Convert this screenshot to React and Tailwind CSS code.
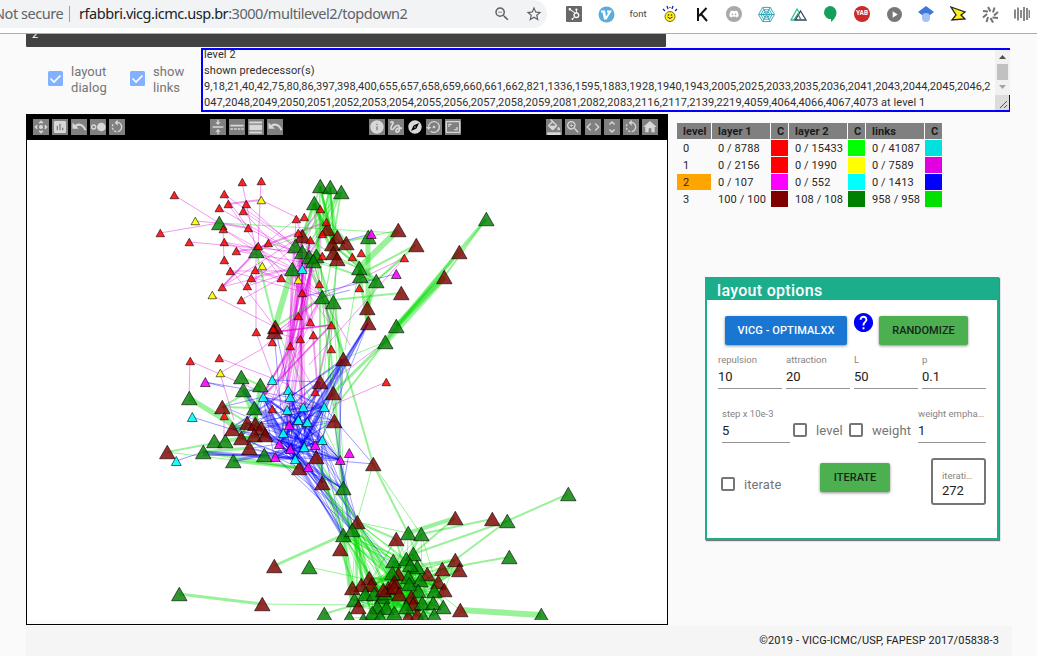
import {
  MdControlCamera, MdInsertChart, MdRotateLeft, MdVerticalAlignCenter, MdViewDay, MdInfo, MdGesture,
  MdExplore, MdSettingsBackupRestore, MdAspectRatio, MdFormatColorFill, MdZoomIn, MdCode, MdUnfoldMore, MdHome,
  MdStarBorder, MdZoomOut, MdHelp, MdPlayArrow,
} from "react-icons/md";
import { FaHubspot, FaDiscord } from "react-icons/fa";

/* ---------- browser bar ---------- */

function Extensions() {
  const cell = "flex w-8 justify-center items-center";
  return (
    <div className="ml-[11px] flex h-7 flex-none items-center">
      <div className={cell}><div className="flex size-4 items-center justify-center rounded-[1px] bg-[#686868] text-[12px] text-white"><FaHubspot /></div></div>
      <div className={cell}>
        <svg width="17" height="17" viewBox="0 0 17 17"><circle cx="8.5" cy="8.5" r="8" fill="#5badde" /><path d="M3 4.500h4l1 6 2.500-4H9V4.500h5L8.500 13.500H6L4.500 6.500H3z" fill="#fff" /></svg>
      </div>
      <div className={cell + " font-['Roboto',sans-serif] text-[9.5px] text-[#444]"}>font</div>
      <div className={cell}>
        <svg width="16" height="18" viewBox="0 0 16 18"><circle cx="8" cy="11.500" r="5" fill="#ffef19" stroke="#77701a" /><g stroke="#2222a0" strokeWidth="1.3"><path d="M5 1l1 3M11 1l-1 3M1 4l2 2M15 4l-2 2M8 2v1" /></g><path d="M5.500 12q2.500 3 5 0" fill="none" stroke="#333" /><circle cx="6.500" cy="10" r=".8" fill="#222" /><circle cx="9.500" cy="10" r=".8" fill="#222" /></svg>
      </div>
      <div className={cell}><svg width="12" height="15" viewBox="0 0 12 15" fill="none" stroke="#111" strokeWidth="2"><path d="M2 1v13M10.500 1L3 9M5 7l6 7" /></svg></div>
      <div className={cell}><div className="flex size-4 items-center justify-center rounded-full bg-[#a9a9a9] text-[10px] text-white"><FaDiscord /></div></div>
      <div className={cell}>
        <svg width="17" height="17" viewBox="0 0 18 18" fill="none" stroke="#28a6b5" strokeWidth="1"><path d="M5 1.500h8L17.500 9 13 16.500H5L.5 9zM6 4h6l3 5-3 5H6L3 9zM7.200 6.300h3.600l1.700 2.700-1.700 2.700H7.200L5.500 9zM5 1.500l8 15M13 1.500l-8 15M1 9h16" /></svg>
      </div>
      <div className={cell}>
        <svg width="17" height="14" viewBox="0 0 17 14" fill="none" strokeWidth="1.300"><path d="M6 13H1L7 2l2.500 4" stroke="#2fc48d" /><path d="M5.500 13l5-9 5.500 9z" stroke="#35495e" /><path d="M4 13l4-6 3 6" stroke="#3b8070" /></svg>
      </div>
      <div className={cell}><svg width="14" height="17" viewBox="0 0 14 17"><path d="M7 0a6.500 6.500 0 016.500 6.500c0 4-3 7.500-5.500 9.500v-3A6.500 6.500 0 117 0" fill="#14a05a" /></svg></div>
      <div className={cell}><div className="flex size-4 items-center justify-center rounded-full bg-[#cb2a26] font-['Roboto',sans-serif] text-[6.5px] font-bold text-white">YAB</div></div>
      <div className={cell}><div className="flex size-[15px] items-center justify-center rounded-full bg-[#777] text-[11px] text-white"><MdPlayArrow /></div></div>
      <div className={cell}>
        <svg width="16" height="17" viewBox="0 0 16 17"><path d="M4 9a4 4 0 118 0v3a4 4 0 11-8 0z" fill="#a5c2f7" /><path d="M8 0l8 6-4 3a5 5 0 00-8 0L0 6z" fill="#3f77d9" /></svg>
      </div>
      <div className={cell}><svg width="17" height="16" viewBox="0 0 17 16"><path d="M1 1l14 5-4 3 4 4-13 1 4-5z" fill="#fff01c" stroke="#222" strokeWidth="1.300" /></svg></div>
      <div className={cell}>
        <svg width="17" height="17" viewBox="0 0 17 17" fill="none" stroke="#737373" strokeWidth="2"><path d="M8.500 5.500L6 1M11 6.500l1.500-5M12 9.500l4-3.500M10.500 11.500l5.500.5M8.500 12l2.500 4.500M6 11l-1.500 5M5 8l-4 3.500M6 5.500L1 5" /></svg>
      </div>
      <div className={cell}><svg width="16" height="16" viewBox="0 0 16 16" stroke="#858585" strokeWidth="1.900"><path d="M1 3.500v9M4 1.500v13M7 4v8M10 1v14M13 2v12M15.500 4v8" /></svg></div>
    </div>
  );
}

function BrowserBar() {
  return (
    <header className="flex h-[34px] items-start overflow-hidden border-b border-[#adadad] bg-white font-['Noto_Sans','Open_Sans',sans-serif] text-[14.5px] whitespace-nowrap text-[#5f6368]">
      <div className="flex h-7 w-[547px] flex-none items-center rounded-r-full bg-[#f1f3f4]">
        <div className="ml-[-6px] w-[68px] flex-none tracking-[-0.45px]">Not secure</div>
        <div className="ml-[7px] h-4 w-px flex-none bg-[#9a9da0]" />
        <div className="ml-[9px] w-[414px] flex-none tracking-[-0.46px]"><span className="text-[#202124]">rfabbri.vicg.icmc.usp.br</span>:3000/multilevel2/topdown2</div>
        <MdZoomOut className="size-[18px] flex-none" />
        <MdStarBorder className="ml-[14px] size-[18px] flex-none" />
      </div>
      <Extensions />
    </header>
  );
}

/* ---------- graph data ---------- */

const red = [[174,195],[160,233],[189,242],[242,182],[261,181],[224,194],[228,204],[246,204],[219,208],[243,211],[223,229],[248,228],[224,242],[236,251],[268,243],[258,246],[224,260],[230,271],[255,270],[251,278],[247,286],[222,287],[241,300],[281,278],[256,332],[272,342],[296,219],[304,217],[320,209],[326,222],[298,233],[322,234],[310,240],[322,256],[319,284],[302,293],[298,316],[310,322],[331,325],[313,335],[300,339],[290,346],[352,257],[361,253],[359,288],[404,258],[331,349],[273,329],[190,361],[219,358],[386,382],[272,409],[224,416],[315,392]];
const yellow = [[261,200],[195,221],[262,266],[298,280],[212,295],[220,373]];
const cyan = [[302,269],[272,380],[288,390],[290,397],[263,397],[287,410],[303,407],[324,407],[298,420],[307,422],[283,433],[192,417],[176,461],[304,447],[322,440],[295,459]];
const magenta = [[371,234],[396,274],[205,382],[289,425],[279,444],[290,449],[315,445],[275,457],[340,460],[349,453],[308,467]];
const green = [[320,186],[330,187],[341,192],[314,203],[219,223],[256,251],[295,246],[302,252],[309,257],[316,256],[313,261],[292,269],[322,297],[333,302],[368,237],[360,276],[359,268],[376,281],[486,219],[396,326],[385,342],[241,377],[243,390],[260,385],[254,408],[189,398],[214,441],[225,441],[203,452],[233,461],[264,455],[343,488],[343,535],[352,530],[309,567],[179,594],[324,614],[568,494],[507,521],[509,557],[408,533],[421,534],[541,615]];
const maroon = [[302,236],[327,229],[337,237],[332,244],[346,243],[333,253],[337,259],[275,327],[274,332],[398,230],[416,245],[459,252],[444,277],[401,293],[367,308],[368,323],[343,359],[320,382],[333,393],[334,421],[222,407],[232,429],[247,423],[255,424],[261,428],[254,435],[265,435],[241,438],[249,448],[167,452],[316,457],[299,468],[322,483],[373,464],[357,522],[340,549],[274,566],[262,604],[455,518],[492,519],[396,539],[455,560],[459,570],[442,569],[460,610]];
const baseMaroon = [[398,574],[427,574],[369,578],[361,585],[352,588],[371,585],[438,582],[444,590],[388,588],[383,590],[394,582],[394,587],[399,594],[411,597],[413,604],[358,607],[408,617],[417,615]];
const baseGreen = [[413,554],[393,561],[406,559],[417,567],[410,565],[392,573],[408,577],[420,580],[409,584],[418,591],[434,591],[365,594],[374,594],[354,600],[382,597],[385,593],[377,607],[386,608],[372,613],[406,607],[422,603],[433,603],[443,607],[349,618],[363,620],[380,617],[394,613],[423,617],[434,615]];

const LIME = "#00dc00", PINK = "#dc00dc", BLUE = "#0000ff";

const links = [
  [PINK,174,195,219,223,1],[PINK,160,233,219,223,1],[PINK,195,221,219,223,1],[PINK,189,242,302,252,1],[PINK,242,182,256,251,1],[PINK,261,181,258,246,1],
  [PINK,228,204,261,200,2],[PINK,261,200,302,220,1],[PINK,224,194,248,228,1],[PINK,219,223,248,228,2],[PINK,223,229,224,260,1],[PINK,224,260,275,327,1],
  [PINK,246,204,298,250,1],[PINK,219,208,300,255,1],[PINK,236,251,320,265,1],[PINK,268,243,256,251,1],[PINK,230,271,315,271,1],[PINK,222,287,295,240,1],
  [PINK,241,300,281,278,1],[PINK,247,286,298,270,1],[PINK,251,278,322,260,1],[PINK,212,295,275,327,1],[PINK,256,251,256,332,1],[PINK,248,228,300,256,1],
  [PINK,256,270,281,278,1],[PINK,243,211,322,297,1],[PINK,222,287,256,251,1],[PINK,256,332,290,425,1],[PINK,190,361,189,398,1],[PINK,190,361,302,410,1],
  [PINK,219,358,290,385,1],[PINK,220,373,260,350,1],[PINK,220,373,234,420,1],[PINK,260,350,322,297,1],[PINK,224,416,224,441,1],[PINK,386,382,333,405,1],
  [PINK,385,342,320,390,1],[PINK,404,258,322,297,1],[PINK,404,258,309,365,1],[PINK,322,297,350,345,1],[PINK,228,204,281,278,1],
  [LIME,256,251,275,327,2],[LIME,275,327,340,460,1],[LIME,256,251,302,236,1],[LIME,219,223,398,233,1],[LIME,292,269,275,327,6],[LIME,322,297,275,327,2],
  [LIME,486,219,396,326,3],[LIME,459,252,385,342,3],[LIME,444,277,396,326,5],[LIME,444,277,385,342,7],[LIME,486,219,444,277,2],[LIME,398,230,359,268,6],
  [LIME,416,245,368,270,2],[LIME,416,245,376,281,2],[LIME,401,293,333,300,2],[LIME,368,237,368,323,5],[LIME,376,281,367,308,4],[LIME,359,268,367,323,3],
  [LIME,398,230,368,237,1],[LIME,332,244,368,237,2],[LIME,359,268,345,350,1],[LIME,404,258,376,281,1],[LIME,343,359,385,342,1],[LIME,333,393,385,342,3],
  [LIME,385,342,333,410,2],[LIME,343,359,373,464,2],[LIME,326,300,343,488,2],[LIME,335,300,342,385,2],[LIME,320,300,320,380,2],[LIME,318,260,343,359,2],
  [LIME,189,398,241,430,5],[LIME,167,452,225,441,2],[LIME,167,452,299,468,1],[LIME,203,452,299,468,3],[LIME,233,461,299,468,3],[LIME,203,452,249,448,3],
  [LIME,243,390,260,428,5],[LIME,260,385,255,424,4],[LIME,241,377,260,385,2],[LIME,222,407,254,408,2],[LIME,225,441,265,435,4],[LIME,222,407,260,385,2],
  [LIME,373,464,357,522,1],[LIME,373,464,408,533,2],[LIME,373,464,421,534,1],[LIME,343,535,274,566,3],[LIME,309,567,369,580,1],[LIME,179,594,262,604,3],
  [LIME,262,604,355,605,1],[LIME,324,614,358,604,2],[LIME,507,521,568,494,2],[LIME,408,533,455,518,4],[LIME,421,534,492,519,2],[LIME,413,554,507,521,2],
  [LIME,442,569,509,557,2],[LIME,455,560,507,521,2],[LIME,460,610,541,615,6],[LIME,443,570,460,570,4],[LIME,413,554,455,518,2],[LIME,422,565,455,560,3],
  [LIME,396,539,357,522,2],[LIME,357,522,408,533,1],[LIME,343,535,352,600,5],[LIME,340,549,355,588,2],[LIME,460,610,435,590,1],[LIME,342,488,343,535,1],
  [BLUE,176,461,203,452,1],[BLUE,192,417,279,444,1],[BLUE,205,382,288,397,1],[BLUE,205,382,224,387,1],[BLUE,203,452,295,459,3],[BLUE,233,461,304,447,3],
  [BLUE,302,297,396,274,1],[BLUE,332,244,371,234,1],[BLUE,319,298,350,290,1],[BLUE,368,323,300,447,2],[BLUE,272,380,320,382,1],[BLUE,349,453,343,488,1],
  [BLUE,222,407,263,397,1],[BLUE,264,455,375,464,1],[BLUE,324,407,373,464,1],[BLUE,275,457,352,530,1],[BLUE,275,327,300,440,1],[BLUE,274,332,283,433,1],
  [BLUE,357,522,392,570,1],[BLUE,299,468,343,535,1],[BLUE,264,410,283,433,5],[BLUE,203,455,264,455,2],[BLUE,243,390,290,449,4],
];

/* Deterministic pseudo random numbers keep the dense bundles stable between renders. */
function makeRandom(seed) {
  let s = seed;
  return () => { s = (s * 16807) % 2147483647; return s / 2147483647; };
}

function bundle(color, from, to, count, seed, width = 0.9) {
  const next = makeRandom(seed);
  const out = [];
  for (let i = 0; i < count; i++) {
    const a = from[Math.floor(next() * from.length)];
    const b = to[Math.floor(next() * to.length)];
    out.push([color, a[0], a[1], b[0] + next() * 6 - 3, b[1], next() > 0.85 ? width + 1 : width]);
  }
  return out;
}

const topCore = [...green.slice(6, 11), ...maroon.slice(0, 7)];
const midBlue = [...cyan.slice(2, 11), ...cyan.slice(13), ...magenta.slice(3, 9)];
const midLeft = maroon.slice(20, 29);
const base = [...baseGreen, ...baseMaroon];
const gate = [[343,535],[352,530],[357,522]];
const hubs = [[292,269],[295,246],[302,252],[310,257],[322,297],[258,249]];

const allLinks = [
  ...bundle(PINK, red.slice(5, 24), hubs, 14, 119),
  ...bundle(PINK, red.slice(26, 42), hubs, 26, 5501),
  ...bundle(PINK, [[302,252],[313,261],[302,236],[310,240]], [[290,346],[298,316],[288,390],[302,293],[289,425],[303,407],[280,380]], 28, 777),
  ...bundle(PINK, [[300,339],[313,335],[322,297],[290,346],[331,325]], [[272,409],[263,397],[315,392],[307,422],[274,332]], 18, 4242),
  ...bundle(LIME, green.slice(0, 4), topCore, 26, 91, 1.7),
  ...bundle(LIME, topCore, [[322,297],[333,302],[359,268],[376,281]], 15, 2718, 1.3),
  ...bundle(LIME, [[322,297],[333,302],[337,259]], [[322,440],[325,380],[343,488],[334,421],[343,359]], 8, 37),
  ...bundle(LIME, midLeft, midLeft, 12, 66, 2),
  ...bundle(BLUE, midBlue, midBlue, 110, 1234),
  ...bundle(BLUE, midBlue, midLeft, 32, 883),
  ...bundle(BLUE, midBlue, [[320,382],[333,393],[334,421],[343,359],[316,457]], 32, 5151),
  ...bundle(BLUE, midBlue.slice(8), [...gate, [343,488],[322,483]], 38, 600),
  ...bundle(BLUE, [[343,359],[368,323],[333,393]], midBlue, 14, 707),
  ...bundle(LIME, [[316,457],[343,488],[322,483]], gate, 12, 88),
  ...bundle(LIME, gate, base, 60, 3131),
  ...bundle(LIME, base, base, 190, 999, 1.1),
  ...bundle(LIME, [[408,533],[421,534],[396,539],[455,560],[459,570],[442,569]], base, 32, 71),
  ...links,
];

function Triangles({ nodes, fill, w, h, opacity = 0.82 }) {
  return nodes.map(([x, y], i) => (
    <path key={i} d={`M${x + 0.3} ${y - h / 2}L${x + 0.3 + w / 2} ${y + h / 2}H${x + 0.3 - w / 2}Z`} fill={fill} fillOpacity={opacity} stroke="#000" strokeOpacity=".75" strokeWidth=".8" />
  ));
}

function Graph() {
  return (
    <svg className="block" width="640" height="480" viewBox="27 140 640 480">
      <g fill="none">
        {allLinks.map(([c, x1, y1, x2, y2, w], i) => (
          <path key={i} d={`M${x1} ${y1}L${x2} ${y2}`} stroke={c} strokeOpacity=".4" strokeWidth={w} />
        ))}
      </g>
      <Triangles nodes={maroon} fill="#800000" w={15.5} h={13.5} />
      <Triangles nodes={green} fill="#008000" w={15.5} h={13.5} />
      <Triangles nodes={baseMaroon.slice(0, 9)} fill="#800000" w={15.5} h={13.5} />
      <Triangles nodes={baseGreen.slice(0, 16)} fill="#008000" w={15.5} h={13.5} />
      <Triangles nodes={baseMaroon.slice(9)} fill="#800000" w={15.5} h={13.5} />
      <Triangles nodes={baseGreen.slice(16)} fill="#008000" w={15.5} h={13.5} />
      <Triangles nodes={cyan} fill="#00ffff" w={9.8} h={9} opacity={0.9} />
      <Triangles nodes={magenta} fill="#ff00ff" w={9.8} h={9} opacity={0.9} />
      <Triangles nodes={yellow} fill="#ffff00" w={8.5} h={7.5} opacity={0.9} />
      <Triangles nodes={red} fill="#ff0000" w={8.5} h={7.5} opacity={0.85} />
    </svg>
  );
}

/* ---------- toolbar ---------- */

const Dots = () => <svg viewBox="0 0 24 24" width="16" height="16"><circle cx="5.500" cy="12" r="3" fill="none" stroke="currentColor" strokeWidth="2" /><circle cx="17" cy="12" r="6.500" fill="currentColor" /></svg>;
const Lines = () => <svg viewBox="0 0 24 24" width="16" height="16" fill="none" stroke="currentColor" strokeWidth="2.500"><path d="M2 10h20M2 15h4M7.500 15h4M13 15h4M18.500 15H22" /></svg>;
const UndoWide = () => <svg viewBox="0 0 16 16" width="16" height="16"><path d="M1.500 3.500v6.300h6.300L5.500 7.500C8.500 5.800 12 7 13.500 11.500l1.800-.6C13 4.700 8 3 4 6z" fill="currentColor" /></svg>;
const Block = () => <MdViewDay size={19} />;

function ToolGroup({ icons, className }) {
  return (
    <div className={"flex gap-[3px] " + className}>
      {icons.map((Icon, i) => (
        <div key={i} className={"flex size-4 items-center justify-center overflow-hidden text-[16px] text-[#d8d8d8] " + (Icon === MdExplore ? "" : "bg-[#808080]")}><Icon className="flex-none" /></div>
      ))}
    </div>
  );
}

function Toolbar() {
  return (
    <div className="flex h-[26px] items-center bg-black">
      <ToolGroup className="ml-[7px]" icons={[MdControlCamera, MdInsertChart, UndoWide, Dots, MdRotateLeft]} />
      <ToolGroup className="ml-[85px]" icons={[MdVerticalAlignCenter, Lines, Block, UndoWide]} />
      <ToolGroup className="ml-[86px]" icons={[MdInfo, MdGesture, MdExplore, MdSettingsBackupRestore, MdAspectRatio]} />
      <ToolGroup className="ml-[85px]" icons={[MdFormatColorFill, MdZoomIn]} />
      <ToolGroup className="ml-1" icons={[MdCode, MdUnfoldMore, MdRotateLeft, MdHome]} />
    </div>
  );
}

/* ---------- top controls ---------- */

function Ticked({ children }) {
  return (
    <div className="flex items-center text-[13px] leading-4 text-[#757575]">
      <svg className="mb-1" width="15" height="15" viewBox="0 0 15 15"><rect width="15" height="15" rx="1.500" fill="#82b1ff" /><path d="M2.500 7.500l3.500 3.500 6.500-6.500" fill="none" stroke="#fff" strokeWidth="1.600" /></svg>
      <div className="ml-[8px] w-[40px] tracking-[0.05px]">{children}</div>
    </div>
  );
}

function LogBox() {
  return (
    <div className="flex h-16 w-[809px] flex-none overflow-hidden border-2 border-r-0 border-[#00f] text-[11px] leading-4 text-[#303030]">
      <div className="mt-[-3px] w-[792px] flex-none pl-[1px] tracking-[0.083px] whitespace-nowrap">
        <div>level 2</div>
        <div>shown predecessor(s)</div>
        <div>9,18,21,40,42,75,80,86,397,398,400,655,657,658,659,660,661,662,821,1336,1595,1883,1928,1940,1943,2005,2025,2033,2035,2036,2041,2043,2044,2045,2046,2</div>
        <div>047,2048,2049,2050,2051,2052,2053,2054,2055,2056,2057,2058,2059,2081,2082,2083,2116,2117,2139,2219,4059,4064,4066,4067,4073 at level 1</div>
      </div>
      <div className="flex w-[15px] flex-col items-center bg-[#f1f1f1]">
        <svg width="15" height="14" viewBox="0 0 15 14"><path d="M7.500 5l3.500 4H4z" fill="#505050" /></svg>
        <div className="h-4 w-[11px] bg-[#c1c1c1]" />
        <svg width="15" height="15" viewBox="0 0 15 15"><path d="M4 5h7L7.500 9z" fill="#a3a3a3" /></svg>
        <div className="h-[15px] w-full border-r border-[#00f] bg-[#dcdcdc]"><svg width="14" height="15" viewBox="0 0 14 15" stroke="#555"><path d="M5 13l7-7M9 13l3-3" /></svg></div>
      </div>
    </div>
  );
}

/* ---------- level table ---------- */

const levels = [
  ["0", "0 / 8788", "bg-[#ff0000]", "0 / 15433", "bg-[#00ff00]", "0 / 41087", "bg-[#00e0e0]"],
  ["1", "0 / 2156", "bg-[#ff0000]", "0 / 1990", "bg-[#ffff00]", "0 / 7589", "bg-[#e000e0]"],
  ["2", "0 / 107", "bg-[#ff00ff]", "0 / 552", "bg-[#00ffff]", "0 / 1413", "bg-[#0000ff]"],
  ["3", "100 / 100", "bg-[#800000]", "108 / 108", "bg-[#008000]", "958 / 958", "bg-[#00e000]"],
];

function LevelTable() {
  return (
    <div className="grid grid-cols-[34px_58px_17px_58px_17px_58px_17px] gap-px text-[11px] leading-[18px] whitespace-nowrap text-[#272727]">
      {["level", "layer 1", "C", "layer 2", "C", "links", "C"].map((t, i) => (
        <div key={i} className="h-4 bg-[#808080] pl-[6px] font-bold tracking-[0.08px] text-[#1c1c1c]">{t}</div>
      ))}
      {levels.map((row, r) => row.map((v, i) => {
        if (v.startsWith("bg-")) return <div key={r + "-" + i} className={"h-4 " + v} />;
        return <div key={r + "-" + i} className={"h-4 pl-[6px] tracking-[0.1px] " + (r === 2 && i === 0 ? "bg-[#ffa500]" : "")}>{v}</div>;
      }))}
    </div>
  );
}

/* ---------- layout options ---------- */

function Field({ label, value, className }) {
  return (
    <div className={"h-[36px] border-b border-[#949494] " + className}>
      <div className="h-[14px] truncate text-[9.5px] leading-[13px] text-[#858585]">{label}</div>
      <div className="pt-[2px] text-[13px] leading-[15px] text-[#212121]">{value}</div>
    </div>
  );
}

function EmptyCheck({ label, className }) {
  return (
    <div className={"flex items-center text-[13px] leading-4 tracking-[0.1px] text-[#757575] " + className}>
      <div className="mb-px size-[14px] flex-none rounded-[2px] border-2 border-[#757575]" />
      <span className="mt-px ml-[9px]">{label}</span>
    </div>
  );
}

function LayoutOptions() {
  const button = "flex h-[29px] items-center justify-center rounded-[2px] text-[11px] font-medium shadow-[0_1px_3px_rgba(0,0,0,0.45)] ";
  return (
    <section className="h-[263px] w-[294px] border-2 border-[#1cad8d] bg-white shadow-[1px_1px_1px_#777]">
      <h2 className="h-[21px] bg-[#1cad8d] pl-[10px] text-[16px] leading-[23px] font-medium tracking-[0.3px] text-white">layout options</h2>
      <div className="ml-[18px] flex pt-4">
        <button className={button + "w-[122px] bg-[#1976d2] pt-px tracking-[0.1px] text-white"}>VICG - OPTIMALXX</button>
        <MdHelp className="mt-[-5px] ml-[4.5px] size-[23px] text-[#00f]" />
        <button className={button + "ml-[4.5px] w-[89px] bg-[#4caf50] pt-px tracking-[0.03px] text-[#17251a]"}>RANDOMIZE</button>
      </div>
      <div className="mt-[8px] ml-[11px] flex gap-1">
        <Field className="w-16" label="repulsion" value="10" />
        <Field className="w-16" label="attraction" value="20" />
        <Field className="w-16" label="L" value="50" />
        <Field className="w-16" label="p" value="0.1" />
      </div>
      <div className="mt-[18px] ml-[15px] flex">
        <Field className="w-[68px]" label="step x 10e-3" value="5" />
        <EmptyCheck className="ml-[3px] w-[56px] pt-[10px]" label="level" />
        <EmptyCheck className="w-[66px] pt-[10px]" label="weight" />
        <Field className="ml-[3px] w-[68px]" label="weight emphasis" value="1" />
      </div>
      <div className="mt-[15px] ml-[14px] flex">
        <EmptyCheck className="h-[52px] w-[99px]" label="iterate" />
        <button className={button + "mt-[5px] w-[70px] bg-[#4caf50] pt-px text-[#17251a]"}>ITERATE</button>
        <div className="ml-[41px] h-[47px] w-[55px] rounded-[3px] border-2 border-[#757575] px-[9px] pt-[9px]">
          <div className="truncate text-[9.5px] leading-[14px] text-[#858585]">iterations</div>
          <div className="text-[13px] leading-[16px] text-[#212121]">272</div>
        </div>
      </div>
    </section>
  );
}

export default function App() {
  return (
    <div className="h-[656px] w-[1037px] overflow-hidden bg-[#fafafa] font-['Roboto',sans-serif]">
      <BrowserBar />
      <div className="ml-[26px]">
        <div className="h-[13px] w-[640px] overflow-hidden rounded-b-[1px] bg-[#424242] pl-[6px] text-[11px] leading-[8px] text-white"><span className="relative -top-[3px]">2</span></div>
        <div className="mt-px flex h-[66px] items-start">
          <div className="flex w-[175px] flex-none pt-[16px] pl-[22px]">
            <Ticked>layout dialog</Ticked>
            <div className="w-[19px]" />
            <Ticked>show links</Ticked>
          </div>
          <LogBox />
        </div>
        <div className="flex">
          <main className="h-[511px] w-[642px] flex-none border border-black bg-white">
            <div className="mx-[-1px] mt-[-1px]"><Toolbar /></div>
            <Graph />
            <div className="h-[4px] bg-[#fafafa]" />
          </main>
          <aside className="ml-[9px] pt-[9px]">
            <LevelTable />
            <div className="mt-[70px] ml-[28px]"><LayoutOptions /></div>
          </aside>
        </div>
        <footer className="mt-px h-[30px] w-[986px] bg-[#f5f5f5] pr-[13px] text-right text-[11px] leading-[30px] tracking-[0.09px] text-[#212121]">©2019 - VICG-ICMC/USP, FAPESP 2017/05838-3</footer>
      </div>
    </div>
  );
}
